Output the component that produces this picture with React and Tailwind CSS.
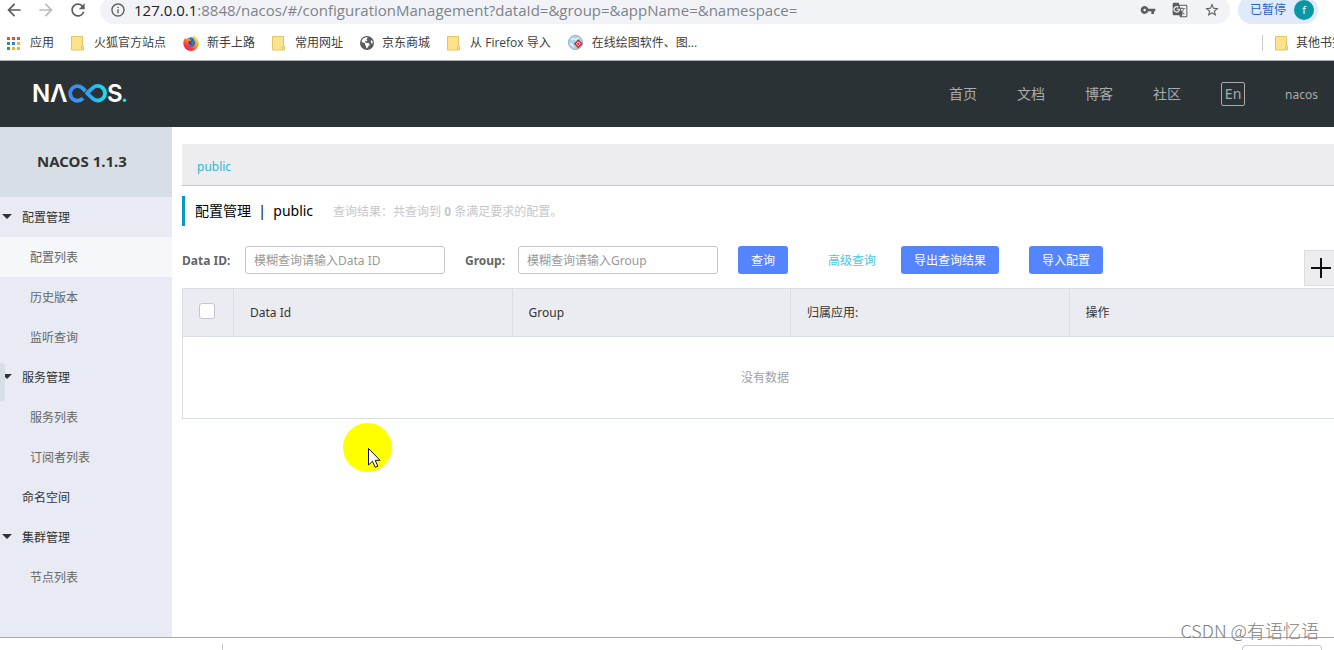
import React from "react";
import {
  MdArrowBack,
  MdArrowForward,
  MdRefresh,
  MdInfoOutline,
  MdVpnKey,
  MdGTranslate,
  MdStarBorder,
} from "react-icons/md";
import { FaEarthAmericas } from "react-icons/fa6";

const APP_DOTS = [
  "#e04a3f", "#e04a3f", "#e04a3f",
  "#2f9e58", "#3b7de0", "#f0b429",
  "#2f9e58", "#f0b429", "#f0b429",
];

function AppsIcon() {
  return (
    <svg width="13" height="13" viewBox="0 0 13 13" aria-hidden="true">
      {APP_DOTS.map((fill, i) => (
        <rect key={i} x={(i % 3) * 5} y={Math.floor(i / 3) * 5} width="3" height="3" fill={fill} />
      ))}
    </svg>
  );
}

function FolderIcon() {
  return (
    <svg width="13" height="16" viewBox="0 0 13 16" aria-hidden="true">
      <path d="M.5 1.5h11v9.5h1v4H.5z" fill="#fde28e" stroke="#e3c565" />
      <path d="M10.500 14.500v-3.200" stroke="#e3c565" fill="none" />
    </svg>
  );
}

function FirefoxIcon() {
  return (
    <svg width="16" height="16" viewBox="0 0 16 16" aria-hidden="true">
      <defs>
        <linearGradient id="fox" x1="0.85" y1="0.1" x2="0.2" y2="0.95">
          <stop offset="0" stopColor="#ffe14a" />
          <stop offset="0.45" stopColor="#ff9320" />
          <stop offset="0.75" stopColor="#ff3b3b" />
          <stop offset="1" stopColor="#e01a6c" />
        </linearGradient>
      </defs>
      <circle cx="8" cy="7.4" r="5.2" fill="#1f6fd0" />
      <path
        d="M10 .2c2 1 3.3 2.300 4 4 .9.9 1.700 2.300 1.700 4.200a7.700 7.500 0 0 1-15.400 0C.3 5.800 1.200 4 2.300 2.800c0 .6.100 1 .4 1.300.8-.4 2-.5 2.900 0 .3-.7 1-1.100 1.700-1.200-.5.6-.6 1-.4 1.500.5.4 1.300.2 1.600.6-.3 1-1.700 1-1.900 1.900.3 1.600 3.200 1.400 3.300.4 1.100.8.4 3-1.700 3.300-1.500.2-2.600-.4-3.200-1.300.3 2 2.100 3 4 2.700 2.500-.4 3.700-2.800 3-5.200-.5-2-2.300-3.200-2-6.600z"
        fill="url(#fox)"
      />
      <path d="M5.700 8.600c-.6-.9-.4-2 .3-2.300.8-.4 1.600-.2 2.200-.8.9.2.700.9-.3 1.300-.5.200-.7.700-.3 1.200.6.700 2 .4 2.600-.2.3 1.400-1 2.300-2.400 2.200-.9 0-1.700-.5-2.100-1.400z" fill="#234a9a" />
    </svg>
  );
}

function DrawSiteIcon() {
  return (
    <svg width="16" height="16" viewBox="0 0 16 16" aria-hidden="true">
      <circle cx="7.500" cy="7.500" r="7" fill="#a9d8ee" stroke="#8fa9b8" />
      <path d="M3 4.500c2-2 3-.5 4 0s2-1.500 4-1M2 9c2 0 3 1 3 3" stroke="#e4f5fb" strokeWidth="1.300" fill="none" />
      <path d="M10.300 4.200l4.500 4.600-4.500 4.600-4.500-4.600z" fill="#cf2e37" />
      <path d="M10.300 6.900l1.900 1.900-1.900 1.900-1.900-1.900z" fill="none" stroke="#fff" />
    </svg>
  );
}

function NacosLogo() {
  return (
    <svg width="96" height="36" viewBox="0 -6 96 36" role="img" aria-label="NACOS" className="overflow-visible">
      <defs>
        <linearGradient id="loop" x1="36" x2="75" y1="0" y2="0" gradientUnits="userSpaceOnUse">
          <stop offset="0" stopColor="#3f85f4" />
          <stop offset="0.5" stopColor="#2fa4f0" />
          <stop offset="1" stopColor="#1fe3ef" />
        </linearGradient>
      </defs>
      <g fill="#fff" className="font-['Inter',sans-serif] text-2xl font-semibold">
        <text x="-1" y="20">N</text>
        <text x="17" y="20">Λ</text>
        <text x="74" y="20">S</text>
      </g>
      <g fill="none" stroke="url(#loop)" strokeWidth="3.800">
        <path d="M50 16.200A7.300 7.300 0 1 1 49.200 5.900L52.500 9" />
        <path d="M54 11.200L59.800 5.800A7.300 7.300 0 1 1 59.800 16.600Z" strokeLinejoin="round" />
      </g>
      <circle cx="91.500" cy="18.300" r="1.700" fill="#1fe3ef" />
    </svg>
  );
}

const BOOKMARKS = [
  { label: "应用", icon: <AppsIcon />, cls: "gap-2.5" },
  { label: "火狐官方站点", icon: <FolderIcon />, cls: "gap-2.5" },
  { label: "新手上路", icon: <FirefoxIcon />, cls: "gap-2" },
  { label: "常用网址", icon: <FolderIcon />, cls: "gap-2.5" },
  { label: "京东商城", icon: <FaEarthAmericas size={14} color="#5a5d61" />, cls: "gap-2" },
  { label: "从 Firefox 导入", icon: <FolderIcon />, cls: "gap-2.5" },
  { label: "在线绘图软件、图...", icon: <DrawSiteIcon />, cls: "gap-2" },
];

function Browser() {
  return (
    <div className="overflow-hidden border-b border-[#a9adb0] bg-white font-['Open_Sans','Noto_Sans_CJK_SC',sans-serif] text-[#3c4043]">
      <div className="-mt-1 flex h-7 items-center pl-1">
        <button aria-label="后退"><MdArrowBack size={20} color="#5a5d61" /></button>
        <button aria-label="前进" className="ml-3"><MdArrowForward size={20} color="#b9bbbe" /></button>
        <button aria-label="刷新" className="ml-3"><MdRefresh size={20} color="#5a5d61" /></button>
        <div className="ml-3 flex h-7 flex-1 items-center rounded-full bg-[#f1f3f7] pr-2.5 pl-2.5">
          <MdInfoOutline size={16} color="#5a5d61" />
          <div className="ml-2 flex-1 text-[15px] whitespace-nowrap text-[#7d838a]">
            <span className="text-[#202124]">127.0.0.1</span>
            :8848/nacos/#/configurationManagement?dataId=&amp;group=&amp;appName=&amp;namespace=
          </div>
          <div className="flex items-center gap-4 text-[#5a5d61]">
            <button aria-label="密码"><MdVpnKey size={16} /></button>
            <button aria-label="翻译"><MdGTranslate size={16} /></button>
            <button aria-label="收藏"><MdStarBorder size={16} /></button>
          </div>
        </div>
        <button className="mr-4 ml-2 flex h-7 items-center gap-2 rounded-full bg-[#e1eafb] pr-1 pl-3 text-xs text-[#2a62c9]">
          已暂停
          <span className="flex size-5 items-center justify-center rounded-full bg-[#0797a7] text-[11px] text-white">f</span>
        </button>
      </div>
      <nav className="flex h-9 items-center gap-[17px] pt-0.5 pl-[7px] text-xs whitespace-nowrap">
        {BOOKMARKS.map((b) => (
          <a key={b.label} href="#" className={"flex items-center " + b.cls}>
            {b.icon}
            {b.label}
          </a>
        ))}
        <a href="#" className="-mr-2.5 ml-auto flex items-center gap-2">
          <span className="mr-1 h-4 w-px bg-[#c9cbce]" />
          <FolderIcon />
          其他书签
        </a>
      </nav>
    </div>
  );
}

const MENU = [
  { label: "配置管理", group: true },
  { label: "配置列表", active: true },
  { label: "历史版本" },
  { label: "监听查询" },
  { label: "服务管理", group: true },
  { label: "服务列表" },
  { label: "订阅者列表" },
  { label: "命名空间", top: true },
  { label: "集群管理", group: true },
  { label: "节点列表" },
];

function Sidebar() {
  return (
    <aside className="relative w-[172px] shrink-0 bg-[#e8ebf3]">
      <h1 className="flex h-[70px] items-center bg-[#d8dee5] pb-0.5 pl-[37px] text-[15px] font-bold text-[#333]">NACOS 1.1.3</h1>
      <ul>
        {MENU.map((m) => (
          <li key={m.label}>
            <a
              href="#"
              className={
                "flex h-10 items-center pt-0.5 text-xs " +
                (m.active ? "bg-[#f5f7fb] " : "") +
                (m.group ? "gap-2.5 pl-0.5 text-[#333]" : m.top ? "pl-[22px] text-[#333]" : "pl-[30px] text-[#666]")
              }
            >
              {m.group && (
                <svg width="10" height="8" viewBox="0 0 10 8" aria-hidden="true">
                  <path d="M0 0h10L5 5z" fill="#333" />
                </svg>
              )}
              {m.label}
            </a>
          </li>
        ))}
      </ul>
      <button aria-label="收起菜单" className="absolute top-[236px] left-0 h-[38px] w-[5px] rounded-r-[4px] bg-[#d8dee5]" />
    </aside>
  );
}

const PRIMARY = "h-7 rounded-[3px] bg-[#5584ff] px-[13px] pt-0.5 text-xs text-white";
const FIELD = "h-7 w-[200px] rounded-[3px] border border-[#c4c6cf] bg-white px-2 text-xs text-[#333] placeholder:text-[#999]";
const HEAD_CELL = "border border-[#dcdee6] px-4 font-normal";

function Main() {
  return (
    <main className="relative min-w-0 flex-1 overflow-hidden bg-white pl-2.5">
      <div className="-mr-3.5">
        <div className="mt-[17px] flex h-[42px] items-center border-b border-[#c7c9cc] bg-[#ededef] pt-1 pl-[15px]">
          <a href="#" className="text-xs text-[#2db7d8]">public</a>
        </div>
        <div className="mt-2.5 flex h-[30px] items-center border-l-3 border-[#0a96c6] pl-2.5">
          <h2 className="text-sm whitespace-pre text-black">{"配置管理  |  public"}</h2>
          <p className="ml-5 pt-0.5 text-xs text-[#c6c7cb]">
            查询结果：共查询到 <strong>0</strong> 条满足要求的配置。
          </p>
        </div>
        <form className="mt-5 flex h-7 items-center" onSubmit={(e) => e.preventDefault()}>
          <label htmlFor="dataId" className="w-[63px] pt-0.5 text-xs font-bold text-[#666]">Data ID:</label>
          <input id="dataId" className={FIELD} placeholder="模糊查询请输入Data ID" />
          <label htmlFor="group" className="ml-5 w-[53px] pt-0.5 text-xs font-bold text-[#666]">Group:</label>
          <input id="group" className={FIELD} placeholder="模糊查询请输入Group" />
          <button className={"ml-5 " + PRIMARY}>查询</button>
          <a href="#" className="mr-[25px] ml-10 pt-0.5 text-xs text-[#4bc6dc]">高级查询</a>
          <button type="button" className={PRIMARY}>导出查询结果</button>
          <button type="button" className={"ml-[30px] " + PRIMARY}>导入配置</button>
        </form>
        <table className="mt-3.5 w-full table-fixed border-collapse border border-[#dcdee6] text-xs">
          <thead>
            <tr className="h-12 bg-[#ebecf1] text-left text-[#333]">
              <th className="w-[51px] border border-[#dcdee6] pr-0.5">
                <input type="checkbox" aria-label="全选" className="mx-auto mb-1 block size-4 appearance-none rounded-[3px] border border-[#c4c6cf] bg-white" />
              </th>
              <th className={HEAD_CELL}>Data Id</th>
              <th className={HEAD_CELL}>Group</th>
              <th className={HEAD_CELL}>归属应用:</th>
              <th className={HEAD_CELL}>操作</th>
            </tr>
          </thead>
          <tbody>
            <tr className="h-[82px]">
              <td colSpan={5} className="text-center text-[#a0a2ad]">没有数据</td>
            </tr>
          </tbody>
        </table>
      </div>
      <button aria-label="新建配置" className="absolute top-[123px] -right-1.5 flex size-9 items-center justify-center border border-[#dcdde0] bg-[#ededef] pr-0.5">
        <svg width="20" height="20" viewBox="0 0 20 20" aria-hidden="true">
          <path d="M0 10h20M10 0v20" stroke="#111" strokeWidth="2" />
        </svg>
      </button>
    </main>
  );
}

export default function App() {
  return (
    <div className="relative flex min-h-screen flex-col overflow-hidden bg-white font-['Noto_Sans','Noto_Sans_CJK_SC',sans-serif]">
      <Browser />
      <header className="flex h-[66px] items-center justify-between bg-[#2b3236] pr-4 pl-[33px] text-sm text-[#a9acae]">
        <NacosLogo />
        <nav className="flex items-center gap-10">
          <a href="#">首页</a>
          <a href="#">文档</a>
          <a href="#">博客</a>
          <a href="#">社区</a>
          <button className="flex size-6 items-center justify-center rounded-[2px] border border-[#a9acae]">En</button>
          <a href="#" className="pt-0.5 text-xs">nacos</a>
        </nav>
      </header>
      <div className="flex flex-1">
        <Sidebar />
        <Main />
      </div>
      <footer className="flex h-[13px] items-end justify-between overflow-hidden border-t border-[#a9a9a9] pr-3 pl-[222px]">
        <span className="h-1.5 w-px bg-[#c9c9c9]" />
        <span className="h-[5px] w-20 rounded-t-[4px] border border-b-0 border-[#c9c9c9]" />
      </footer>
      <svg className="pointer-events-none absolute top-[423px] left-[343px]" width="49" height="49" viewBox="0 0 49 49" aria-hidden="true">
        <circle cx="24.500" cy="24.500" r="24.500" fill="#ffff00" />
        <path d="M25.500 25.500v16.500l4-3.700 2.700 6 2.600-1.100-2.600-5.900h4.800z" fill="#fff" stroke="#111" />
      </svg>
      <p className="pointer-events-none absolute right-[15px] bottom-1.5 font-['Noto_Sans_CJK_SC',sans-serif] text-lg leading-7 font-light text-[#808080]">
        CSDN @有语忆语
      </p>
    </div>
  );
}
